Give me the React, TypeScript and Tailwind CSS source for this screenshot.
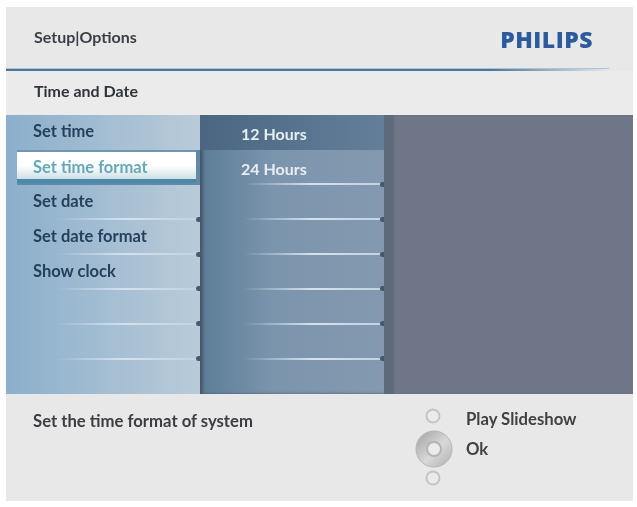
const menuItems = ["Set time", "Set time format", "Set date", "Set date format", "Show clock", "", "", ""];
const formatItems = ["12 Hours", "24 Hours", "", "", "", "", "", ""];

const RowLine = ({ dotClass, lineClass }: { dotClass: string; lineClass: string }) => (
  <div className="flex h-[3px] translate-y-[1px] items-center justify-end">
    <div className={`h-[2px] ${lineClass} bg-gradient-to-r from-transparent via-[#d5e2ee] to-[#c2d2e0]`} />
    <div className={`h-[5px] w-[4px] rounded-l-full ${dotClass}`} />
  </div>
);

const NavIcon = () => (
  <svg width="44" height="80" viewBox="0 0 44 80" className="shrink-0">
    <defs>
      <linearGradient id="ring" x1="0" y1="0" x2="1" y2="1">
        <stop offset="0" stopColor="#a0a0a0" />
        <stop offset="0.55" stopColor="#d8d8d8" />
        <stop offset="1" stopColor="#b0b0b0" />
      </linearGradient>
    </defs>
    <circle cx="21" cy="9" r="6.5" fill="#ebebeb" stroke="#c4c4c4" strokeWidth="2" />
    <circle cx="22" cy="42" r="18" fill="url(#ring)" stroke="#b5b5b5" />
    <circle cx="22" cy="42" r="7" fill="#ebebeb" stroke="#b4b4b4" strokeWidth="2" />
    <circle cx="21" cy="71" r="6.5" fill="#ebebeb" stroke="#c4c4c4" strokeWidth="2" />
  </svg>
);

export default function App() {
  return (
    <div className="h-[507px] w-[637px] overflow-hidden bg-white pl-[6px] pt-[7px] font-['Lato',sans-serif] blur-[0.6px]">
      <div className="flex h-[494px] w-[627px] flex-col bg-[#e8e8e8]">
        {/* Header */}
        <div className="flex h-[61px] items-start justify-between pl-[28px] pr-[40px]">
          <span className="mt-[20px] text-[16px] leading-[20px] font-bold text-[#3a3f47]">Setup|Options</span>
          <span className="mt-[18px] font-['Open_Sans',sans-serif] text-[23px] leading-[28px] font-extrabold tracking-[0.5px] text-[#2c5a9c]">
            PHILIPS
          </span>
        </div>
        <div className="mr-[24px] h-[3px] border-t border-[#a9c4d8] bg-gradient-to-r from-[#4c7596] from-80% to-transparent" />
        <div className="flex h-[44px] items-start bg-[#ebebeb] pl-[28px] pt-[10px]">
          <span className="text-[16px] leading-[20px] font-bold text-[#2f343b]">Time and Date</span>
        </div>

        {/* Menu panel */}
        <div className="flex h-[279px]">
          <div className="flex w-[194px] flex-col bg-gradient-to-r from-[#8cafcb] to-[#b9cbd9]">
            {menuItems.map((item, i) =>
              i === 1 ? (
                <div key={i} className="ml-[11px] h-[35px] bg-[#5f8ba8] pr-[4px]">
                  <div className="flex h-[33px] items-center rounded-[2px] border-b-[4px] border-t-[2px] border-b-[#4a8aa8] border-t-[#6f97ad] bg-gradient-to-b from-white from-50% to-[#cfe0e6] pl-[16px] pt-[4px]">
                    <span className="text-[16.5px] leading-[20px] font-bold text-[#66a8b8]">{item}</span>
                  </div>
                </div>
              ) : (
                <div key={i} className="flex h-[35px] flex-col justify-between">
                  <span className="pl-[27px] pt-[6px] text-[16.5px] leading-[20px] font-bold text-[#263f5c]">{item}</span>
                  {i > 0 && i < 7 && <RowLine dotClass="bg-[#4a5b70]" lineClass="w-[140px]" />}
                </div>
              )
            )}
          </div>

          <div className="flex w-[184px] flex-col bg-gradient-to-r from-[#5c7d96] via-[#7b95ad] via-40% to-[#8499b0] shadow-[inset_3px_0_3px_#48586c]">
            {formatItems.map((item, i) => (
              <div
                key={i}
                className={`flex h-[35px] flex-col justify-between ${i === 0 ? "bg-gradient-to-r from-[#4a6680] to-[#637f9a]" : ""}`}
              >
                <span className="pl-[41px] pt-[9px] text-[16px] leading-[20px] font-bold text-[#e6eef4]">{item}</span>
                {i > 0 && i < 7 && <RowLine dotClass="bg-[#46586e]" lineClass="w-[136px]" />}
              </div>
            ))}
          </div>

          <div className="flex-1 bg-[#6e7687] shadow-[inset_10px_0_2px_#5d6a7c]" />
        </div>

        {/* Footer */}
        <div className="flex flex-1 items-start pl-[27px]">
          <span className="mt-[16px] w-[379px] shrink-0 text-[16.7px] leading-[22px] font-bold text-[#3a3d42]">
            Set the time format of system
          </span>
          <div className="mt-[13px]">
            <NavIcon />
          </div>
          <div className="ml-[10px] mt-[10px] flex flex-col text-[16.7px] leading-[30px] font-bold text-[#3f4145]">
            <span>Play Slideshow</span>
            <span>Ok</span>
          </div>
        </div>
      </div>
    </div>
  );
}
